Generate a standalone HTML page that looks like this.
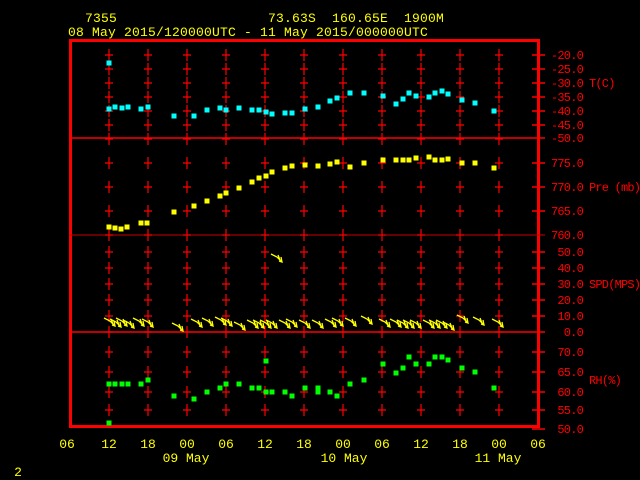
<!DOCTYPE html>
<html><head><meta charset="utf-8"><style>
html,body{margin:0;padding:0;background:#000;width:640px;height:480px;overflow:hidden}
svg{display:block}
text{font-family:"Liberation Mono",monospace;white-space:pre}
</style></head><body>
<svg width="640" height="480" viewBox="0 0 640 480" xmlns="http://www.w3.org/2000/svg">
<defs>
<g id="c" stroke="#f00" stroke-width="1.2"><path d="M0,-6V6M-4,0H4"/></g>
<g id="col">
<use href="#c" y="55"/><use href="#c" y="69"/><use href="#c" y="83"/><use href="#c" y="97"/><use href="#c" y="111"/><use href="#c" y="125"/><use href="#c" y="139"/>
<use href="#c" y="163"/><use href="#c" y="187"/><use href="#c" y="211"/><use href="#c" y="235"/>
<use href="#c" y="252"/><use href="#c" y="268"/><use href="#c" y="284"/><use href="#c" y="300"/><use href="#c" y="316"/><use href="#c" y="332"/>
<use href="#c" y="352"/><use href="#c" y="372"/><use href="#c" y="392"/><use href="#c" y="410"/>
</g>
<g id="a" stroke="#ff0" stroke-width="1.3" fill="none"><path d="M-11,-7L-5,-4L0,1M-4,-6L-2,-1M-1,-4L0,1L-3,0"/></g>
<rect id="s" x="-2.5" y="-2.5" width="5" height="5"/>
</defs>
<g fill="#ff0" font-size="13" letter-spacing="0.2">
<text x="85" y="22">7355</text>
<text x="268" y="22" xml:space="preserve">73.63S  160.65E  1900M</text>
<text x="68" y="36">08 May 2015/120000UTC - 11 May 2015/000000UTC</text>
</g>
<rect x="70.5" y="40.5" width="468" height="386" fill="none" stroke="#f00" stroke-width="3"/>
<g stroke="#f00" stroke-width="1.5">
<path d="M70,138H545M70,332H545"/>
<path d="M70,235H545" stroke="#c00" stroke-width="1"/>
<path d="M532,55H545M532,69H545M532,83H545M532,97H545M532,111H545M532,125H545M532,163H545M532,187H545M532,211H545M532,252H545M532,268H545M532,284H545M532,300H545M532,316H545M532,352H545M532,372H545M532,392H545M532,410H545M532,429H545"/>
</g>
<use href="#col" x="109"/><use href="#col" x="148"/><use href="#col" x="187"/><use href="#col" x="226"/><use href="#col" x="265"/><use href="#col" x="304"/><use href="#col" x="343"/><use href="#col" x="382"/><use href="#col" x="421"/><use href="#col" x="460"/><use href="#col" x="499"/>
<g fill="#f00" font-size="12" letter-spacing="-0.8" text-anchor="end">
<text x="583" y="59">-20.0</text><text x="583" y="73">-25.0</text><text x="583" y="87">-30.0</text><text x="583" y="101">-35.0</text><text x="583" y="115">-40.0</text><text x="583" y="129">-45.0</text><text x="583" y="142">-50.0</text>
<text x="583" y="167">775.0</text><text x="583" y="191">770.0</text><text x="583" y="215">765.0</text><text x="583" y="239">760.0</text>
<text x="583" y="256">50.0</text><text x="583" y="272">40.0</text><text x="583" y="288">30.0</text><text x="583" y="304">20.0</text><text x="583" y="320">10.0</text><text x="583" y="336">0.0</text>
<text x="583" y="356">70.0</text><text x="583" y="376">65.0</text><text x="583" y="396">60.0</text><text x="583" y="414">55.0</text><text x="583" y="433">50.0</text>
</g>
<g fill="#f00" font-size="12" letter-spacing="-0.8">
<text x="589" y="87">T(C)</text><text x="589" y="191" xml:space="preserve">Pre (mb)</text><text x="589" y="288">SPD(MPS)</text><text x="589" y="384">RH(%)</text>
</g>
<g fill="#ff0" font-size="13" text-anchor="middle">
<text x="67" y="448">06</text><text x="109" y="448">12</text><text x="148" y="448">18</text><text x="187" y="448">00</text><text x="226" y="448">06</text><text x="265" y="448">12</text><text x="304" y="448">18</text><text x="343" y="448">00</text><text x="382" y="448">06</text><text x="421" y="448">12</text><text x="460" y="448">18</text><text x="499" y="448">00</text><text x="538" y="448">06</text>
<text x="186" y="462">09 May</text><text x="344" y="462">10 May</text><text x="498" y="462">11 May</text>
<text x="18" y="476">2</text>
</g>
<g fill="#0ff">
<use href="#s" x="109" y="63"/><use href="#s" x="109" y="109"/><use href="#s" x="115" y="107"/><use href="#s" x="122" y="108"/><use href="#s" x="128" y="107"/><use href="#s" x="141" y="109"/><use href="#s" x="148" y="107"/><use href="#s" x="174" y="116"/><use href="#s" x="194" y="116"/><use href="#s" x="207" y="110"/><use href="#s" x="220" y="108"/><use href="#s" x="226" y="110"/><use href="#s" x="239" y="108"/><use href="#s" x="252" y="110"/><use href="#s" x="259" y="110"/><use href="#s" x="266" y="112"/><use href="#s" x="272" y="114"/><use href="#s" x="285" y="113"/><use href="#s" x="292" y="113"/><use href="#s" x="305" y="109"/><use href="#s" x="318" y="107"/><use href="#s" x="330" y="101"/><use href="#s" x="337" y="98"/><use href="#s" x="350" y="93"/><use href="#s" x="364" y="93"/><use href="#s" x="383" y="96"/><use href="#s" x="396" y="104"/><use href="#s" x="403" y="99"/><use href="#s" x="409" y="93"/><use href="#s" x="416" y="96"/><use href="#s" x="429" y="97"/><use href="#s" x="435" y="93"/><use href="#s" x="442" y="91"/><use href="#s" x="448" y="94"/><use href="#s" x="462" y="100"/><use href="#s" x="475" y="103"/><use href="#s" x="494" y="111"/>
</g>
<g fill="#ff0">
<use href="#s" x="109" y="227"/><use href="#s" x="115" y="228"/><use href="#s" x="121" y="229"/><use href="#s" x="127" y="227"/><use href="#s" x="141" y="223"/><use href="#s" x="147" y="223"/><use href="#s" x="174" y="212"/><use href="#s" x="194" y="206"/><use href="#s" x="207" y="201"/><use href="#s" x="220" y="196"/><use href="#s" x="226" y="193"/><use href="#s" x="239" y="188"/><use href="#s" x="252" y="182"/><use href="#s" x="259" y="178"/><use href="#s" x="266" y="176"/><use href="#s" x="272" y="172"/><use href="#s" x="285" y="168"/><use href="#s" x="292" y="166"/><use href="#s" x="305" y="165"/><use href="#s" x="318" y="166"/><use href="#s" x="330" y="164"/><use href="#s" x="337" y="162"/><use href="#s" x="350" y="167"/><use href="#s" x="364" y="163"/><use href="#s" x="383" y="160"/><use href="#s" x="396" y="160"/><use href="#s" x="403" y="160"/><use href="#s" x="409" y="160"/><use href="#s" x="416" y="158"/><use href="#s" x="429" y="157"/><use href="#s" x="435" y="160"/><use href="#s" x="442" y="160"/><use href="#s" x="448" y="159"/><use href="#s" x="462" y="163"/><use href="#s" x="475" y="163"/><use href="#s" x="494" y="168"/>
</g>
<use href="#a" x="282" y="261"/>
<use href="#a" x="115" y="325"/><use href="#a" x="121" y="326"/><use href="#a" x="127" y="325"/><use href="#a" x="134" y="327"/><use href="#a" x="144" y="325"/><use href="#a" x="153" y="326"/><use href="#a" x="183" y="330"/><use href="#a" x="202" y="326"/><use href="#a" x="213" y="325"/><use href="#a" x="226" y="324"/><use href="#a" x="232" y="325"/><use href="#a" x="245" y="329"/><use href="#a" x="258" y="327"/><use href="#a" x="264" y="327"/><use href="#a" x="271" y="327"/><use href="#a" x="277" y="327"/><use href="#a" x="290" y="327"/><use href="#a" x="297" y="326"/><use href="#a" x="310" y="327"/><use href="#a" x="323" y="327"/><use href="#a" x="336" y="326"/><use href="#a" x="343" y="325"/><use href="#a" x="356" y="325"/><use href="#a" x="372" y="323"/><use href="#a" x="390" y="326"/><use href="#a" x="401" y="326"/><use href="#a" x="408" y="327"/><use href="#a" x="414" y="327"/><use href="#a" x="421" y="327"/><use href="#a" x="434" y="327"/><use href="#a" x="440" y="327"/><use href="#a" x="447" y="327"/><use href="#a" x="454" y="329"/><use href="#a" x="468" y="322"/><use href="#a" x="484" y="324"/><use href="#a" x="503" y="326"/>
<g fill="#0f0">
<use href="#s" x="109" y="423"/><use href="#s" x="109" y="384"/><use href="#s" x="115" y="384"/><use href="#s" x="122" y="384"/><use href="#s" x="128" y="384"/><use href="#s" x="141" y="384"/><use href="#s" x="148" y="380"/><use href="#s" x="174" y="396"/><use href="#s" x="194" y="399"/><use href="#s" x="207" y="392"/><use href="#s" x="220" y="388"/><use href="#s" x="226" y="384"/><use href="#s" x="239" y="384"/><use href="#s" x="252" y="388"/><use href="#s" x="259" y="388"/><use href="#s" x="266" y="361"/><use href="#s" x="266" y="392"/><use href="#s" x="272" y="392"/><use href="#s" x="285" y="392"/><use href="#s" x="292" y="396"/><use href="#s" x="305" y="388"/><use href="#s" x="318" y="388"/><use href="#s" x="318" y="392"/><use href="#s" x="330" y="392"/><use href="#s" x="337" y="396"/><use href="#s" x="350" y="384"/><use href="#s" x="364" y="380"/><use href="#s" x="383" y="364"/><use href="#s" x="396" y="373"/><use href="#s" x="403" y="368"/><use href="#s" x="409" y="357"/><use href="#s" x="416" y="364"/><use href="#s" x="429" y="364"/><use href="#s" x="435" y="357"/><use href="#s" x="442" y="357"/><use href="#s" x="448" y="360"/><use href="#s" x="462" y="368"/><use href="#s" x="475" y="372"/><use href="#s" x="494" y="388"/>
</g>
</svg>
</body></html>
